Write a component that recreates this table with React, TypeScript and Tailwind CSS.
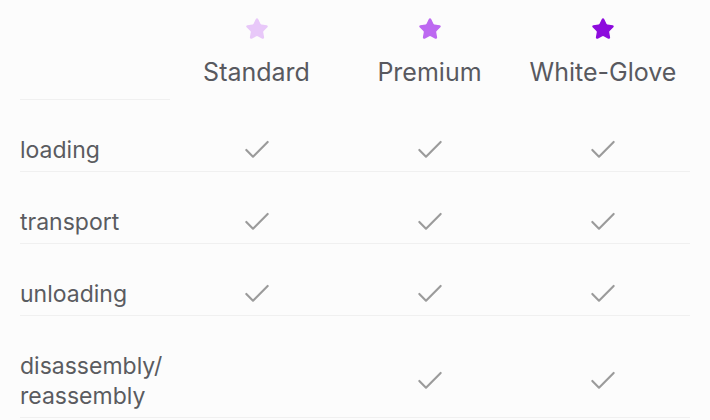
import { Check, Star } from "lucide-react";

const tiers = [
  { name: "Standard", color: "#e8c8f9" },
  { name: "Premium", color: "#bd69f1" },
  { name: "White-Glove", color: "#8d0bdd" },
];

const rows = [
  { label: "loading", checks: [true, true, true] },
  { label: "transport", checks: [true, true, true] },
  { label: "unloading", checks: [true, true, true] },
  { label: "disassembly/\nreassembly", checks: [false, true, true] },
];

export default function App() {
  return (
    <div
      className="w-[710px] h-[420px] bg-[#fcfcfc] px-5 overflow-hidden"
      style={{ fontFamily: "Inter, 'Noto Sans', sans-serif" }}
    >
      <div className="grid grid-cols-[150px_173px_173px_174px]">
        {/* header */}
        <div className="h-[100px] border-b border-[#f0f0f0]" />
        {tiers.map((t) => (
          <div key={t.name} className="h-[100px] flex flex-col items-center pt-[17px]">
            <Star size={24} fill={t.color} color={t.color} strokeWidth={1.5} />
            <div className="mt-[16px] text-[25px] leading-[30px] text-[#58595f]">
              {t.name}
            </div>
          </div>
        ))}

        {/* rows */}
        {rows.map((r) => (
          <>
            <div
              key={r.label}
              className="pt-[35px] pb-[6px] border-b border-[#f0f0f0] text-[23px] leading-[30px] text-[#5a5b60] whitespace-pre-line"
            >
              {r.label}
            </div>
            {r.checks.map((c, i) => (
              <div
                key={r.label + i}
                className="pt-[35px] pb-[6px] border-b border-[#f0f0f0] flex items-center justify-center"
              >
                <div className="h-[30px] flex items-center">
                  {c && <Check size={32} color="#9b9b9b" strokeWidth={1.6} />}
                </div>
              </div>
            ))}
          </>
        ))}
      </div>
    </div>
  );
}
